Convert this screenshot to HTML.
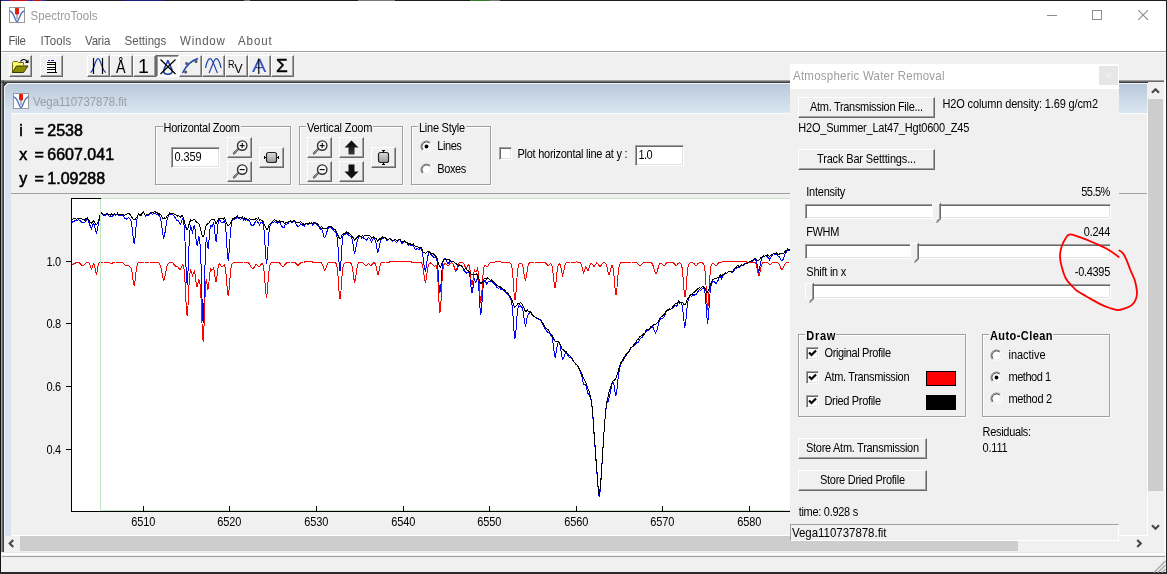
<!DOCTYPE html>
<html><head><meta charset="utf-8"><title>SpectroTools</title>
<style>
html,body{margin:0;padding:0;}
body{width:1167px;height:574px;overflow:hidden;background:#fff;position:relative;
 font-family:"Liberation Sans",sans-serif;font-size:11px;color:#000;}
div,span.t,svg{position:absolute;box-sizing:border-box;}
span.t{white-space:nowrap;}
.btn{background:#f0f0f0;border:1px solid;border-color:#fff #696969 #696969 #fff;box-shadow:inset -1px -1px 0 #a0a0a0;}
.btnp{border:1px solid;border-color:#696969 #fff #fff #696969;box-shadow:inset 1px 1px 0 #a0a0a0;
 background-color:#fff;background-image:linear-gradient(45deg,#f0f0f0 25%,transparent 25%,transparent 75%,#f0f0f0 75%),linear-gradient(45deg,#f0f0f0 25%,transparent 25%,transparent 75%,#f0f0f0 75%);background-size:2px 2px;background-position:0 0,1px 1px;}
.grp{border:1px solid #a0a0a0;box-shadow:1px 1px 0 #fff, inset 1px 1px 0 #fff;}
.sunk{background:#fff;border:1px solid;border-color:#a0a0a0 #fff #fff #a0a0a0;box-shadow:inset 1px 1px 0 #696969, inset -1px -1px 0 #e3e3e3;}
.chk{background:#fff;border:1px solid;border-color:#a0a0a0 #fff #fff #a0a0a0;box-shadow:inset 1px 1px 0 #696969, inset -1px -1px 0 #e3e3e3;}
.lbl{background:#f0f0f0;}
.trk{background:#fff;border:1px solid;border-color:#a0a0a0 #fff #fff #a0a0a0;box-shadow:inset 1px 1px 0 #696969, inset -1px -1px 0 #e3e3e3;}
</style></head><body>
<div id="root" style="left:0;top:0;width:1167px;height:574px;will-change:transform;">

<div style="left:0px;top:0px;width:1167px;height:1px;background:linear-gradient(90deg,#222 0px,#222 2px,#2a2ab0 2px,#2a2ab0 10px,#c01818 10px,#c01818 28px,#2a2ab0 28px,#2a2ab0 33px,#c01818 33px,#c01818 42px,#2a2ab0 42px,#2a2ab0 46px,#1c1c1c 46px,#1c1c1c 122px,#1c1c78 122px,#1c1c78 165px,#1c1c1c 165px,#1c1c1c 244px,#777 244px,#777 250px,#1c1c1c 250px,#1c1c1c 358px,#7a7a7a 358px,#7a7a7a 395px,#1c1c1c 395px,#1c1c1c 470px,#2f7a2f 470px,#2f7a2f 490px,#777 490px,#777 500px,#1c1c1c 500px,#1c1c1c 1167px);"></div>
<div style="left:0px;top:0px;width:1px;height:574px;background:#111;"></div>
<div style="left:1166px;top:0px;width:1px;height:574px;background:#222;"></div>
<div style="left:0px;top:572px;width:1167px;height:2px;background:#2a2a2a;"></div>
<svg style="left:9px;top:7px" width="16" height="16" viewBox="0 0 16 16"><rect x="0.5" y="0.5" width="15" height="15" fill="#fff" stroke="#9a9a9a"/><path d="M0.5 4 C3.5 4 5 9 6.2 12 C7 14 7.6 14.6 8 14.6 C8.4 14.6 9 14 9.8 12 C11 9 12.5 4 15.5 4" fill="none" stroke="#4a6fc0" stroke-width="1.3"/><rect x="7.3" y="6" width="1.4" height="6.5" fill="#9a9a9a"/><rect x="6" y="0.7" width="4" height="6.8" rx="1.3" fill="#e81c0c"/></svg>
<span class="t" style="left:30.60px;top:9.32px;font-size:11.5px;line-height:15px;color:#9b9b9b;letter-spacing:0.048px;transform:scaleY(1.03);transform-origin:0 11.48px;">SpectroTools</span>
<svg style="left:1040px;top:5px" width="120" height="22" viewBox="0 0 120 22"><path d="M7 10.5H17" stroke="#8c8c8c" stroke-width="1" fill="none"/><rect x="52.5" y="5.5" width="9" height="9" stroke="#8c8c8c" fill="none"/><path d="M98.3 5.2L108 14.9M108 5.2L98.3 14.9" stroke="#8c8c8c" stroke-width="1.1" fill="none"/></svg>
<span class="t" style="left:8.50px;top:33.52px;font-size:11.5px;line-height:15px;color:#585858;letter-spacing:-0.410px;transform:scaleY(1.03);transform-origin:0 11.48px;">File</span>
<span class="t" style="left:40.50px;top:33.52px;font-size:11.5px;line-height:15px;color:#585858;letter-spacing:0.152px;transform:scaleY(1.03);transform-origin:0 11.48px;">ITools</span>
<span class="t" style="left:85.00px;top:33.52px;font-size:11.5px;line-height:15px;color:#585858;letter-spacing:-0.173px;transform:scaleY(1.03);transform-origin:0 11.48px;">Varia</span>
<span class="t" style="left:124.50px;top:33.52px;font-size:11.5px;line-height:15px;color:#585858;letter-spacing:0.036px;transform:scaleY(1.03);transform-origin:0 11.48px;">Settings</span>
<span class="t" style="left:180.00px;top:33.52px;font-size:11.5px;line-height:15px;color:#585858;letter-spacing:0.780px;transform:scaleY(1.03);transform-origin:0 11.48px;">Window</span>
<span class="t" style="left:238.00px;top:33.52px;font-size:11.5px;line-height:15px;color:#585858;letter-spacing:0.937px;transform:scaleY(1.03);transform-origin:0 11.48px;">About</span>
<div style="left:1px;top:51px;width:1165px;height:29px;background:#f0f0f0;border-top:1px solid #a0a0a0;box-shadow:inset 0 1px 0 #fff;"></div>
<div class="btn" style="left:9px;top:55px;width:23px;height:22px;"></div>
<svg style="left:9px;top:55px" width="23" height="22" viewBox="0 0 23 22" ><path d="M3.5 17.5V7.5l1-1h4l1 1h5v3" fill="#f4f07a" stroke="#6b6b10" stroke-width="1"/><path d="M3.5 8.5h5.5l1 1h4.5v2H7z" fill="#ffff66" stroke="none"/><path d="M3.5 17.5l4-6.5h11.5l-4.5 6.5z" fill="#8b8b00" stroke="#3a3a00" stroke-width="1"/><path d="M11.5 6.5c2-3 5.5-2.5 6.5 0.5" fill="none" stroke="#000" stroke-width="1.2"/><path d="M19.5 4.5v3.5h-3.5z" fill="#000"/></svg>
<div class="btn" style="left:40px;top:55px;width:23px;height:22px;"></div>
<svg style="left:40px;top:55px" width="23" height="22" viewBox="0 0 23 22" shape-rendering="crispEdges"><rect x="6" y="6" width="10" height="11.5" fill="#fff"/><path d="M8 5.5h2M11 5.5h2.5" stroke="#2222dd" stroke-width="1"/><path d="M7 7.5h7.5M7 9.5h7.5M7 12.5h7.5M7 14.5h7.5M6.5 17.5h10M15.5 6.5v11" stroke="#000" stroke-width="1" fill="none"/></svg>
<div class="btn" style="left:87px;top:55px;width:23px;height:22px;"></div>
<div class="btn" style="left:110px;top:55px;width:23px;height:22px;"></div>
<div class="btn" style="left:133px;top:55px;width:23px;height:22px;"></div>
<div class="btnp" style="left:156px;top:55px;width:23px;height:22px;"></div>
<div class="btn" style="left:179px;top:55px;width:23px;height:22px;"></div>
<div class="btn" style="left:202px;top:55px;width:23px;height:22px;"></div>
<div class="btn" style="left:225px;top:55px;width:23px;height:22px;"></div>
<div class="btn" style="left:248px;top:55px;width:23px;height:22px;"></div>
<div class="btn" style="left:271px;top:55px;width:23px;height:22px;"></div>
<svg style="left:87px;top:55px" width="23" height="22" viewBox="0 0 23 22" ><path d="M3.5 17.5C7 16.5 8 3.6 11 3.6S15 16.5 19 17.5" fill="none" stroke="#1c3fa8" stroke-width="1.2"/><path d="M6.5 3v16M15.5 3v16" stroke="#000" stroke-width="1.2"/></svg>
<span class="t" style="left:116.00px;top:56.04px;font-size:17.5px;line-height:22px;color:#000;transform-origin:0 17.06px;transform:scaleX(0.82);">Å</span>
<span class="t" style="left:137.90px;top:53.74px;font-size:19.5px;line-height:25px;color:#000;transform-origin:0 19.26px;">1</span>
<svg style="left:156px;top:55px" width="23" height="22" viewBox="0 0 23 22" ><path d="M11.9 5.2C11 9 7.6 13.3 7.6 16C7.6 18.1 9.6 19.2 11.9 19.2S16.2 18.1 16.2 16C16.2 13.3 12.8 9 11.9 5.2z" fill="none" stroke="#1c3fa8" stroke-width="1.5"/><path d="M4.5 4.5L19.5 19M19.5 4.5L4.5 19" stroke="#000" stroke-width="1.2"/></svg>
<svg style="left:179px;top:55px" width="23" height="22" viewBox="0 0 23 22" ><path d="M3.5 18C7 11 12 5.5 19 3.5" fill="none" stroke="#1c3fa8" stroke-width="1.5"/><circle cx="7.6" cy="8.6" r="1.5" fill="#555"/><circle cx="17" cy="6.6" r="1.5" fill="#555"/><circle cx="6.6" cy="17" r="1.5" fill="#555"/></svg>
<svg style="left:202px;top:55px" width="23" height="22" viewBox="0 0 23 22" ><path d="M3.5 13C4.5 8 6 3.6 8.3 3.6S12.5 12 15.5 18" fill="none" stroke="#1c3fa8" stroke-width="1.2"/><path d="M19 13C18 8 16.5 3.6 14.2 3.6S10 12 7 18" fill="none" stroke="#1c3fa8" stroke-width="1.2"/></svg>
<span class="t" style="left:227.9px;top:57.9px;font-size:11px;line-height:12px;transform:scaleX(0.82);transform-origin:0 0;">R</span>
<span class="t" style="left:234.3px;top:61.5px;font-size:12.5px;line-height:14px;">V</span>
<span class="t" style="left:251.60px;top:54.02px;font-size:18.7px;line-height:24px;color:#3557c0;transform-origin:0 18.48px;transform:scaleX(1.15);">A</span>
<svg style="left:248px;top:55px" width="23" height="22" viewBox="0 0 23 22" ><path d="M10.8 3.5v15.5" stroke="#000" stroke-width="1.2"/></svg>
<span class="t" style="left:276.00px;top:54.32px;font-size:19px;line-height:24px;color:#000;transform-origin:0 18.58px;-webkit-text-stroke:0.5px #000;">Σ</span>
<div style="left:1px;top:80px;width:1164px;height:473px;background:#f0f0f0;"></div>
<div style="left:1px;top:80px;width:1164px;height:3px;background:linear-gradient(#a0a0a0 0,#a0a0a0 33.3%,#696969 33.3%,#696969 66.6%,#404040 66.6%);"></div>
<div style="left:1px;top:80px;width:3px;height:473px;background:linear-gradient(90deg,#a0a0a0 0,#a0a0a0 33.3%,#696969 33.3%,#696969 66.6%,#404040 66.6%);"></div>
<div style="left:1px;top:80px;width:3px;height:3px;background:linear-gradient(135deg,#a0a0a0 0,#a0a0a0 33.3%,#696969 33.3%,#696969 66.6%,#404040 66.6%);"></div>
<div style="left:4px;top:83px;width:1143px;height:453px;background:#d7e4f2;border-top-left-radius:6px;border:1px solid #eef3fb;border-right:none;border-bottom:none;"></div>
<div style="left:5px;top:84px;width:1142px;height:29px;background:linear-gradient(#b9c9db,#dae6f2);border-top-left-radius:5px;"></div>
<div style="left:4px;top:83px;width:6px;height:6px;background:radial-gradient(circle at 6px 6px, transparent 0, transparent 5px, #eef3fb 5.2px, #eef3fb 6px, #404040 6.4px);"></div>
<svg style="left:13px;top:93px" width="16" height="16" viewBox="0 0 16 16"><rect x="0.5" y="0.5" width="15" height="15" fill="#fff" stroke="#9a9a9a"/><path d="M0.5 4 C3.5 4 5 9 6.2 12 C7 14 7.6 14.6 8 14.6 C8.4 14.6 9 14 9.8 12 C11 9 12.5 4 15.5 4" fill="none" stroke="#4a6fc0" stroke-width="1.3"/><rect x="7.3" y="6" width="1.4" height="6.5" fill="#9a9a9a"/><rect x="6" y="0.7" width="4" height="6.8" rx="1.3" fill="#e81c0c"/></svg>
<span class="t" style="left:33.00px;top:94.52px;font-size:11.5px;line-height:15px;color:#9a9da2;letter-spacing:-0.066px;transform:scaleY(1.03);transform-origin:0 11.48px;">Vega110737878.fit</span>
<div style="left:11px;top:113px;width:1137px;height:423px;background:#f0f0f0;border-right:1px solid #fff;border-bottom:1px solid #fff;border-top:1px solid #fbfbfb;"></div>
<div style="left:4px;top:536px;width:1144px;height:16px;background:#f0f0f0;"></div>
<div style="left:20px;top:536px;width:998px;height:15px;background:#cdcdcd;"></div>
<div style="left:1148px;top:82px;width:17px;height:471px;background:#f0f0f0;"></div>
<div style="left:1148px;top:99px;width:15px;height:392px;background:#cdcdcd;"></div>
<div style="left:1164px;top:80px;width:1px;height:473px;background:#fbfbfb;"></div>
<svg style="left:0;top:0" width="1167" height="574" viewBox="0 0 1167 574"><path d="M13.25 540L9.75 543.5L13.25 547" fill="none" stroke="#4a4a4a" stroke-width="2.2"/></svg>
<svg style="left:0;top:0" width="1167" height="574" viewBox="0 0 1167 574"><path d="M1137.25 540L1140.75 543.5L1137.25 547" fill="none" stroke="#4a4a4a" stroke-width="2.2"/></svg>
<svg style="left:0;top:0" width="1167" height="574" viewBox="0 0 1167 574"><path d="M1152 92.75L1155.5 89.25L1159 92.75" fill="none" stroke="#4a4a4a" stroke-width="2.2"/></svg>
<svg style="left:0;top:0" width="1167" height="574" viewBox="0 0 1167 574"><path d="M1152 525.25L1155.5 528.75L1159 525.25" fill="none" stroke="#4a4a4a" stroke-width="2.2"/></svg>
<div style="left:1px;top:553px;width:1165px;height:19px;background:#f0f0f0;"></div>
<div style="left:1px;top:552px;width:1164px;height:1px;background:#e8e8e8;"></div>
<div style="left:1px;top:553px;width:1164px;height:2px;background:#fdfdfd;"></div>
<div style="left:2px;top:556px;width:1163px;height:1px;background:#a0a0a0;"></div>
<svg style="left:1153px;top:560px" width="13" height="13" viewBox="0 0 13 13" ><path d="M1 12.5L12.5 1M5 12.5L12.5 5M9 12.5L12.5 9" stroke="#a5a5a5" stroke-width="1.2" fill="none"/></svg>
<span class="t" style="left:19.30px;top:120.76px;font-size:16px;line-height:20px;color:#000;-webkit-text-stroke:0.55px #000;">i</span>
<span class="t" style="left:34.50px;top:120.76px;font-size:16px;line-height:20px;color:#000;-webkit-text-stroke:0.55px #000;">=</span>
<span class="t" style="left:47.30px;top:120.76px;font-size:16px;line-height:20px;color:#000;-webkit-text-stroke:0.55px #000;">2538</span>
<span class="t" style="left:19.30px;top:144.76px;font-size:16px;line-height:20px;color:#000;-webkit-text-stroke:0.55px #000;">x</span>
<span class="t" style="left:34.50px;top:144.76px;font-size:16px;line-height:20px;color:#000;-webkit-text-stroke:0.55px #000;">=</span>
<span class="t" style="left:47.30px;top:144.76px;font-size:16px;line-height:20px;color:#000;-webkit-text-stroke:0.55px #000;">6607.041</span>
<span class="t" style="left:19.30px;top:168.66px;font-size:16px;line-height:20px;color:#000;-webkit-text-stroke:0.55px #000;">y</span>
<span class="t" style="left:34.50px;top:168.66px;font-size:16px;line-height:20px;color:#000;-webkit-text-stroke:0.55px #000;">=</span>
<span class="t" style="left:47.30px;top:168.66px;font-size:16px;line-height:20px;color:#000;-webkit-text-stroke:0.55px #000;">1.09288</span>
<div style="left:11px;top:193px;width:1136px;height:1px;background:#a0a0a0;"></div>
<div class="grp" style="left:155px;top:126px;width:136px;height:59px;"></div>
<div class="lbl" style="left:162.5px;top:120px;width:78px;height:12px;"></div>
<span class="t" style="left:163.50px;top:121.39px;font-size:11px;line-height:14px;color:#000;letter-spacing:-0.299px;transform:scaleY(1.13);transform-origin:0 10.81px;">Horizontal Zoom</span>
<div class="sunk" style="left:171px;top:147px;width:49px;height:21px;"></div>
<span class="t" style="left:174.50px;top:150.19px;font-size:11px;line-height:14px;color:#000;letter-spacing:-0.131px;transform:scaleY(1.13);transform-origin:0 10.81px;">0.359</span>
<div class="btn" style="left:227px;top:137px;width:25px;height:21px;"></div>
<svg style="left:227px;top:137px" width="25" height="21" viewBox="0 0 25 21" ><path d="M6.9 16.4L11.3 12" stroke="#5a5a5a" stroke-width="2.3" stroke-linecap="round"/><path d="M7 16.1L10.8 12.3" stroke="#c8c8c8" stroke-width="0.7" stroke-linecap="round"/><circle cx="15.2" cy="8.6" r="4.7" fill="#f8f8f8" stroke="#303030" stroke-width="1.4"/><path d="M12.7 8.6h5" stroke="#000" stroke-width="1.1"/><path d="M15.2 6.1v5" stroke="#000" stroke-width="1.1"/></svg>
<div class="btn" style="left:227px;top:161px;width:25px;height:21px;"></div>
<svg style="left:227px;top:161px" width="25" height="21" viewBox="0 0 25 21" ><path d="M6.9 16.4L11.3 12" stroke="#5a5a5a" stroke-width="2.3" stroke-linecap="round"/><path d="M7 16.1L10.8 12.3" stroke="#c8c8c8" stroke-width="0.7" stroke-linecap="round"/><circle cx="15.2" cy="8.6" r="4.7" fill="#f8f8f8" stroke="#303030" stroke-width="1.4"/><path d="M12.7 8.6h5" stroke="#000" stroke-width="1.1"/></svg>
<div class="btn" style="left:259px;top:147px;width:25px;height:21px;"></div>
<svg style="left:259px;top:147px" width="25" height="21" viewBox="0 0 25 21" ><defs><linearGradient id="g1" x1="0" y1="0" x2="0" y2="1"><stop offset="0" stop-color="#dcdcdc"/><stop offset="1" stop-color="#9a9a9a"/></linearGradient></defs><rect x="7.5" y="5.5" width="10" height="10" rx="2" fill="url(#g1)" stroke="#222" stroke-width="1.2"/><path d="M5 10.5h2.5M17.5 10.5h2.5" stroke="#000" stroke-width="1.2"/><path d="M5.5 9v3M19.5 9v3" stroke="#000" stroke-width="1"/></svg>
<div class="grp" style="left:299px;top:126px;width:104px;height:59px;"></div>
<div class="lbl" style="left:306px;top:120px;width:67px;height:12px;"></div>
<span class="t" style="left:307.00px;top:121.39px;font-size:11px;line-height:14px;color:#000;letter-spacing:-0.145px;transform:scaleY(1.13);transform-origin:0 10.81px;">Vertical Zoom</span>
<div class="btn" style="left:307px;top:137px;width:25px;height:21px;"></div>
<svg style="left:307px;top:137px" width="25" height="21" viewBox="0 0 25 21" ><path d="M6.9 16.4L11.3 12" stroke="#5a5a5a" stroke-width="2.3" stroke-linecap="round"/><path d="M7 16.1L10.8 12.3" stroke="#c8c8c8" stroke-width="0.7" stroke-linecap="round"/><circle cx="15.2" cy="8.6" r="4.7" fill="#f8f8f8" stroke="#303030" stroke-width="1.4"/><path d="M12.7 8.6h5" stroke="#000" stroke-width="1.1"/><path d="M15.2 6.1v5" stroke="#000" stroke-width="1.1"/></svg>
<div class="btn" style="left:307px;top:161px;width:25px;height:21px;"></div>
<svg style="left:307px;top:161px" width="25" height="21" viewBox="0 0 25 21" ><path d="M6.9 16.4L11.3 12" stroke="#5a5a5a" stroke-width="2.3" stroke-linecap="round"/><path d="M7 16.1L10.8 12.3" stroke="#c8c8c8" stroke-width="0.7" stroke-linecap="round"/><circle cx="15.2" cy="8.6" r="4.7" fill="#f8f8f8" stroke="#303030" stroke-width="1.4"/><path d="M12.7 8.6h5" stroke="#000" stroke-width="1.1"/></svg>
<div class="btn" style="left:339px;top:137px;width:25px;height:21px;"></div>
<svg style="left:339px;top:137px" width="25" height="21" viewBox="0 0 25 21" ><defs><linearGradient id="g2" x1="0" y1="0" x2="0" y2="1"><stop offset="0" stop-color="#000"/><stop offset="1" stop-color="#3a3a3a"/></linearGradient></defs><path d="M12.5 3.5L19.5 10.5H15.5V17.5H9.5V10.5H5.5z" fill="url(#g2)"/></svg>
<div class="btn" style="left:339px;top:161px;width:25px;height:21px;"></div>
<svg style="left:339px;top:161px" width="25" height="21" viewBox="0 0 25 21" ><path d="M12.5 17.5L19.5 10.5H15.5V3.5H9.5V10.5H5.5z" fill="#111"/></svg>
<div class="btn" style="left:371px;top:147px;width:25px;height:21px;"></div>
<svg style="left:371px;top:147px" width="25" height="21" viewBox="0 0 25 21" ><rect x="7.5" y="5.5" width="10" height="10" rx="2" fill="url(#g1)" stroke="#222" stroke-width="1.2"/><path d="M12.5 3v2.5M12.5 15.5v2.5" stroke="#000" stroke-width="1.2"/><path d="M11 3.5h3M11 17.5h3" stroke="#000" stroke-width="1"/></svg>
<div class="grp" style="left:411px;top:126px;width:80px;height:59px;"></div>
<div class="lbl" style="left:418px;top:120px;width:47.5px;height:12px;"></div>
<span class="t" style="left:419.00px;top:121.39px;font-size:11px;line-height:14px;color:#000;letter-spacing:-0.256px;transform:scaleY(1.13);transform-origin:0 10.81px;">Line Style</span>
<svg style="left:419.7px;top:139.5px" width="13" height="13" viewBox="0 0 13 13" ><circle cx="6.5" cy="6.5" r="5.2" fill="#fff"/><path d="M2.61 10.39A5.5 5.5 0 0 1 10.39 2.61" fill="none" stroke="#8a8a8a" stroke-width="1.1"/><path d="M3.32 9.68A4.5 4.5 0 0 1 9.68 3.32" fill="none" stroke="#4a4a4a" stroke-width="1"/><path d="M2.61 10.39A5.5 5.5 0 0 0 10.39 2.61" fill="none" stroke="#fff" stroke-width="1.1"/><path d="M3.32 9.68A4.5 4.5 0 0 0 9.68 3.32" fill="none" stroke="#e3e3e3" stroke-width="1"/><circle cx="6.5" cy="6.5" r="1.9" fill="#000"/></svg>
<span class="t" style="left:437.30px;top:139.19px;font-size:11px;line-height:14px;color:#000;letter-spacing:-0.449px;transform:scaleY(1.13);transform-origin:0 10.81px;">Lines</span>
<svg style="left:419.7px;top:162.8px" width="13" height="13" viewBox="0 0 13 13" ><circle cx="6.5" cy="6.5" r="5.2" fill="#fff"/><path d="M2.61 10.39A5.5 5.5 0 0 1 10.39 2.61" fill="none" stroke="#8a8a8a" stroke-width="1.1"/><path d="M3.32 9.68A4.5 4.5 0 0 1 9.68 3.32" fill="none" stroke="#4a4a4a" stroke-width="1"/><path d="M2.61 10.39A5.5 5.5 0 0 0 10.39 2.61" fill="none" stroke="#fff" stroke-width="1.1"/><path d="M3.32 9.68A4.5 4.5 0 0 0 9.68 3.32" fill="none" stroke="#e3e3e3" stroke-width="1"/></svg>
<span class="t" style="left:437.30px;top:162.19px;font-size:11px;line-height:14px;color:#000;letter-spacing:-0.393px;transform:scaleY(1.13);transform-origin:0 10.81px;">Boxes</span>
<div class="chk" style="left:499px;top:147px;width:13px;height:13px;"></div>
<span class="t" style="left:517.50px;top:146.69px;font-size:11px;line-height:14px;color:#000;letter-spacing:-0.261px;transform:scaleY(1.13);transform-origin:0 10.81px;">Plot horizontal line at y :</span>
<div class="sunk" style="left:635px;top:145px;width:49px;height:21px;"></div>
<span class="t" style="left:638.50px;top:148.19px;font-size:11px;line-height:14px;color:#000;letter-spacing:-0.645px;transform:scaleY(1.13);transform-origin:0 10.81px;">1.0</span>
<div style="left:72px;top:199px;width:718px;height:312px;background:#fff;"></div>
<svg style="left:0;top:0" width="790" height="536" viewBox="0 0 790 536"><g shape-rendering="crispEdges"><path d="M71.5,222.1L72.5,222.1L73.5,221.2L74.5,221.0L75.5,220.7L76.5,220.9L77.5,220.6L78.5,219.7L79.5,220.2L80.5,220.7L81.5,222.0L82.5,222.8L83.5,222.6L84.5,222.9L85.5,220.9L86.5,219.8L87.5,219.3L88.5,221.2L89.5,223.8L90.5,227.0L91.5,228.6L92.5,225.7L93.5,223.5L94.5,224.6L95.5,230.8L96.5,233.9L97.5,228.6L98.5,223.2L99.5,219.2L100.5,214.1L101.5,213.4L102.5,214.6L103.5,215.0L104.5,215.3L105.5,215.8L106.5,214.4L107.5,214.4L108.5,215.8L109.5,216.4L110.5,216.9L111.5,216.6L112.5,215.9L113.5,214.9L114.5,214.0L115.5,215.1L116.5,214.9L117.5,214.6L118.5,215.6L119.5,215.5L120.5,215.4L121.5,215.7L122.5,215.3L123.5,215.7L124.5,218.2L125.5,218.5L126.5,219.2L127.5,218.2L128.5,217.4L129.5,218.3L130.5,219.6L131.5,223.0L132.5,229.9L133.5,241.9L134.5,243.2L135.5,232.3L136.5,221.9L137.5,216.4L138.5,214.3L139.5,215.5L140.5,215.9L141.5,215.0L142.5,213.1L143.5,211.9L144.5,214.2L145.5,216.0L146.5,214.8L147.5,215.5L148.5,215.5L149.5,213.9L150.5,213.4L151.5,213.3L152.5,214.2L153.5,213.7L154.5,213.6L155.5,213.9L156.5,214.2L157.5,214.4L158.5,215.7L159.5,215.6L160.5,218.3L161.5,223.7L162.5,232.3L163.5,237.9L164.5,235.6L165.5,229.6L166.5,222.4L167.5,217.8L168.5,215.6L169.5,212.9L170.5,214.1L171.5,214.7L172.5,214.8L173.5,215.3L174.5,217.0L175.5,218.3L176.5,220.2L177.5,220.4L178.5,220.4L179.5,223.6L180.5,224.6L181.5,221.0L182.5,219.0L183.5,220.6L184.5,229.9L185.5,252.1L186.5,281.0L187.5,285.1L188.5,258.0L189.5,234.2L190.5,225.4L191.5,229.3L192.5,232.4L193.5,228.1L194.5,224.8L195.5,232.6L196.5,244.3L197.5,245.3L198.5,236.8L199.5,238.3L200.5,249.6L201.5,278.4L202.5,318.6L203.5,323.2L204.5,284.1L205.5,246.6L206.5,236.9L207.5,247.5L208.5,248.2L209.5,232.8L210.5,225.4L211.5,226.0L212.5,226.0L213.5,223.1L214.5,227.1L215.5,240.2L216.5,240.9L217.5,228.0L218.5,221.1L219.5,220.0L220.5,221.0L221.5,222.4L222.5,222.8L223.5,222.4L224.5,220.6L225.5,225.2L226.5,238.8L227.5,256.3L228.5,260.7L229.5,246.3L230.5,231.1L231.5,223.0L232.5,219.8L233.5,219.5L234.5,219.1L235.5,218.3L236.5,218.0L237.5,217.3L238.5,218.7L239.5,218.7L240.5,219.5L241.5,218.6L242.5,217.8L243.5,220.4L244.5,218.7L245.5,220.0L246.5,219.4L247.5,220.3L248.5,219.9L249.5,220.9L250.5,223.1L251.5,225.7L252.5,225.5L253.5,225.6L254.5,223.6L255.5,221.5L256.5,220.4L257.5,221.5L258.5,223.3L259.5,225.2L260.5,222.8L261.5,222.1L262.5,222.7L263.5,224.6L264.5,235.5L265.5,253.7L266.5,264.3L267.5,256.1L268.5,237.3L269.5,227.7L270.5,224.5L271.5,223.7L272.5,222.0L273.5,222.1L274.5,221.9L275.5,222.2L276.5,221.9L277.5,223.3L278.5,222.3L279.5,221.7L280.5,223.8L281.5,225.8L282.5,227.1L283.5,227.2L284.5,227.1L285.5,223.7L286.5,224.1L287.5,223.8L288.5,222.9L289.5,221.5L290.5,221.4L291.5,222.9L292.5,222.3L293.5,221.3L294.5,221.6L295.5,222.8L296.5,225.6L297.5,226.0L298.5,226.6L299.5,225.6L300.5,223.9L301.5,224.5L302.5,225.3L303.5,224.8L304.5,226.0L305.5,224.6L306.5,223.8L307.5,224.8L308.5,224.7L309.5,223.8L310.5,223.9L311.5,223.5L312.5,225.1L313.5,223.9L314.5,223.3L315.5,223.1L316.5,224.7L317.5,224.5L318.5,226.6L319.5,227.8L320.5,229.2L321.5,228.6L322.5,231.4L323.5,235.3L324.5,237.8L325.5,236.8L326.5,232.8L327.5,230.3L328.5,227.8L329.5,227.5L330.5,227.7L331.5,228.0L332.5,228.9L333.5,230.2L334.5,231.7L335.5,231.4L336.5,233.9L337.5,240.0L338.5,253.7L339.5,270.2L340.5,270.4L341.5,252.7L342.5,238.3L343.5,234.3L344.5,234.1L345.5,234.1L346.5,233.2L347.5,233.7L348.5,235.1L349.5,235.4L350.5,236.2L351.5,237.2L352.5,241.1L353.5,247.1L354.5,254.1L355.5,249.6L356.5,243.9L357.5,239.8L358.5,237.6L359.5,236.5L360.5,236.5L361.5,238.0L362.5,237.3L363.5,237.9L364.5,238.6L365.5,239.1L366.5,240.2L367.5,238.9L368.5,237.5L369.5,238.2L370.5,240.0L371.5,241.6L372.5,239.8L373.5,237.9L374.5,238.7L375.5,241.7L376.5,244.9L377.5,252.6L378.5,251.8L379.5,244.5L380.5,241.2L381.5,239.1L382.5,237.9L383.5,238.1L384.5,237.5L385.5,238.2L386.5,240.5L387.5,240.1L388.5,239.3L389.5,238.7L390.5,239.0L391.5,240.0L392.5,241.2L393.5,240.9L394.5,240.7L395.5,241.7L396.5,242.7L397.5,241.8L398.5,239.1L399.5,239.7L400.5,240.7L401.5,243.2L402.5,243.1L403.5,242.3L404.5,241.7L405.5,242.8L406.5,242.9L407.5,243.5L408.5,245.3L409.5,244.6L410.5,244.9L411.5,245.8L412.5,245.4L413.5,245.6L414.5,248.3L415.5,249.2L416.5,249.0L417.5,248.8L418.5,249.2L419.5,249.7L420.5,248.3L421.5,249.2L422.5,253.0L423.5,260.7L424.5,268.1L425.5,271.6L426.5,265.0L427.5,257.0L428.5,254.0L429.5,252.4L430.5,254.3L431.5,254.9L432.5,255.9L433.5,257.1L434.5,257.6L435.5,257.5L436.5,257.8L437.5,263.1L438.5,276.8L439.5,292.1L440.5,292.0L441.5,276.5L442.5,263.7L443.5,259.4L444.5,258.9L445.5,259.0L446.5,261.3L447.5,263.2L448.5,263.3L449.5,261.6L450.5,261.2L451.5,262.8L452.5,263.1L453.5,264.7L454.5,268.7L455.5,271.4L456.5,270.7L457.5,268.3L458.5,266.4L459.5,265.1L460.5,265.9L461.5,266.0L462.5,267.2L463.5,269.4L464.5,271.5L465.5,272.0L466.5,273.1L467.5,272.6L468.5,272.3L469.5,273.8L470.5,280.9L471.5,292.4L472.5,292.2L473.5,283.1L474.5,279.4L475.5,281.9L476.5,281.1L477.5,278.0L478.5,282.7L479.5,299.5L480.5,315.4L481.5,310.2L482.5,294.4L483.5,282.7L484.5,280.3L485.5,281.1L486.5,284.0L487.5,282.7L488.5,281.2L489.5,281.3L490.5,281.5L491.5,280.9L492.5,281.9L493.5,282.8L494.5,284.2L495.5,285.1L496.5,287.1L497.5,287.8L498.5,288.1L499.5,287.7L500.5,288.8L501.5,289.8L502.5,289.3L503.5,289.8L504.5,291.0L505.5,292.0L506.5,293.3L507.5,293.7L508.5,295.2L509.5,296.5L510.5,298.6L511.5,301.6L512.5,308.3L513.5,323.0L514.5,338.3L515.5,337.8L516.5,322.1L517.5,310.0L518.5,305.6L519.5,306.2L520.5,305.8L521.5,307.0L522.5,307.9L523.5,313.8L524.5,321.7L525.5,326.9L526.5,321.5L527.5,315.4L528.5,314.1L529.5,313.1L530.5,312.2L531.5,313.4L532.5,314.9L533.5,316.1L534.5,316.9L535.5,317.5L536.5,317.5L537.5,318.4L538.5,318.9L539.5,319.6L540.5,320.0L541.5,321.2L542.5,324.4L543.5,325.9L544.5,328.2L545.5,329.1L546.5,330.3L547.5,332.6L548.5,332.4L549.5,333.3L550.5,335.3L551.5,335.2L552.5,338.9L553.5,346.2L554.5,355.9L555.5,357.2L556.5,349.8L557.5,343.9L558.5,342.5L559.5,343.4L560.5,346.9L561.5,354.2L562.5,359.2L563.5,357.9L564.5,355.4L565.5,353.0L566.5,352.9L567.5,354.8L568.5,356.1L569.5,357.3L570.5,357.5L571.5,358.0L572.5,359.6L573.5,361.9L574.5,362.5L575.5,364.2L576.5,364.6L577.5,365.5L578.5,367.8L579.5,369.9L580.5,372.2L581.5,374.8L582.5,379.9L583.5,384.5L584.5,384.8L585.5,384.9L586.5,386.8L587.5,392.7L588.5,394.4L589.5,395.8L590.5,397.6L591.5,402.9L592.5,411.5L593.5,426.5L594.5,440.7L595.5,453.1L596.5,468.0L597.5,479.4L598.5,494.1L599.5,497.3L600.5,487.3L601.5,473.0L602.5,455.5L603.5,440.4L604.5,425.1L605.5,413.7L606.5,404.2L607.5,402.3L608.5,400.6L609.5,396.3L610.5,391.8L611.5,386.0L612.5,382.0L613.5,382.4L614.5,388.3L615.5,395.0L616.5,393.9L617.5,383.6L618.5,375.0L619.5,368.6L620.5,364.5L621.5,362.9L622.5,361.3L623.5,359.9L624.5,357.4L625.5,356.6L626.5,354.4L627.5,353.2L628.5,352.8L629.5,351.6L630.5,348.6L631.5,347.8L632.5,346.8L633.5,346.0L634.5,345.2L635.5,343.9L636.5,342.8L637.5,342.0L638.5,342.0L639.5,339.5L640.5,338.5L641.5,337.5L642.5,337.4L643.5,335.4L644.5,334.8L645.5,331.9L646.5,330.8L647.5,330.6L648.5,330.2L649.5,329.8L650.5,327.8L651.5,327.2L652.5,326.7L653.5,328.4L654.5,331.3L655.5,333.1L656.5,331.5L657.5,328.7L658.5,323.8L659.5,320.7L660.5,318.5L661.5,318.2L662.5,318.4L663.5,317.2L664.5,316.9L665.5,313.1L666.5,310.8L667.5,310.0L668.5,309.7L669.5,308.9L670.5,309.2L671.5,308.7L672.5,308.3L673.5,307.2L674.5,306.6L675.5,305.7L676.5,306.3L677.5,305.0L678.5,301.6L679.5,303.5L680.5,302.7L681.5,303.1L682.5,307.0L683.5,316.1L684.5,326.7L685.5,325.2L686.5,313.1L687.5,302.8L688.5,298.8L689.5,296.8L690.5,295.8L691.5,296.1L692.5,295.9L693.5,294.8L694.5,295.0L695.5,294.8L696.5,294.5L697.5,292.2L698.5,290.9L699.5,289.4L700.5,290.2L701.5,289.5L702.5,288.7L703.5,288.9L704.5,289.4L705.5,295.5L706.5,311.8L707.5,324.1L708.5,316.9L709.5,299.7L710.5,287.9L711.5,284.2L712.5,281.3L713.5,281.4L714.5,281.6L715.5,283.4L716.5,283.6L717.5,281.0L718.5,279.7L719.5,277.2L720.5,276.5L721.5,278.6L722.5,276.7L723.5,275.4L724.5,274.4L725.5,273.4L726.5,273.5L727.5,272.6L728.5,271.5L729.5,271.3L730.5,271.5L731.5,272.6L732.5,272.6L733.5,271.8L734.5,269.7L735.5,268.7L736.5,268.7L737.5,267.7L738.5,267.3L739.5,267.3L740.5,265.7L741.5,265.7L742.5,265.6L743.5,264.9L744.5,263.3L745.5,263.1L746.5,263.8L747.5,263.4L748.5,262.8L749.5,261.5L750.5,261.4L751.5,261.8L752.5,261.3L753.5,260.3L754.5,259.0L755.5,260.0L756.5,260.9L757.5,266.3L758.5,271.8L759.5,270.2L760.5,262.6L761.5,259.0L762.5,257.0L763.5,255.7L764.5,256.2L765.5,255.6L766.5,256.6L767.5,256.8L768.5,258.0L769.5,259.6L770.5,257.4L771.5,256.2L772.5,254.8L773.5,253.3L774.5,254.3L775.5,254.9L776.5,254.1L777.5,255.5L778.5,256.1L779.5,256.9L780.5,258.8L781.5,260.5L782.5,260.4L783.5,258.8L784.5,255.3L785.5,252.4L786.5,252.0L787.5,249.1L788.5,250.1L789.5,250.3L790.5,249.9" fill="none" stroke="#0000ff" stroke-width="1"/><path d="M71.5,264.8L72.5,264.6L73.5,264.1L74.5,263.5L75.5,263.0L76.5,262.6L77.5,262.4L78.5,262.5L79.5,262.9L80.5,263.9L81.5,265.1L82.5,265.9L83.5,265.5L84.5,264.4L85.5,263.2L86.5,262.6L87.5,262.4L88.5,262.5L89.5,263.8L90.5,267.0L91.5,269.1L92.5,266.4L93.5,263.8L94.5,264.9L95.5,270.8L96.5,274.7L97.5,269.2L98.5,263.9L99.5,262.5L100.5,262.2L101.5,262.1L102.5,262.1L103.5,262.0L104.5,262.0L105.5,262.0L106.5,262.0L107.5,262.1L108.5,262.4L109.5,262.9L110.5,263.4L111.5,263.4L112.5,263.0L113.5,262.4L114.5,262.1L115.5,262.0L116.5,262.0L117.5,262.0L118.5,262.0L119.5,262.1L120.5,262.1L121.5,262.2L122.5,262.5L123.5,263.2L124.5,264.4L125.5,265.4L126.5,265.6L127.5,265.3L128.5,265.6L129.5,266.7L130.5,267.3L131.5,268.8L132.5,275.1L133.5,284.0L134.5,285.0L135.5,276.4L136.5,267.8L137.5,263.8L138.5,262.7L139.5,262.4L140.5,262.3L141.5,262.2L142.5,262.1L143.5,262.1L144.5,262.0L145.5,262.0L146.5,262.1L147.5,262.1L148.5,262.1L149.5,262.0L150.5,262.0L151.5,262.0L152.5,262.1L153.5,262.1L154.5,262.1L155.5,262.2L156.5,262.2L157.5,262.4L158.5,262.7L159.5,263.5L160.5,265.8L161.5,270.3L162.5,276.2L163.5,280.3L164.5,279.2L165.5,273.8L166.5,268.2L167.5,264.7L168.5,263.1L169.5,262.6L170.5,262.5L171.5,262.5L172.5,262.7L173.5,263.7L174.5,265.0L175.5,266.2L176.5,266.5L177.5,266.4L178.5,267.4L179.5,269.4L180.5,269.2L181.5,266.8L182.5,265.0L183.5,265.7L184.5,272.2L185.5,290.3L186.5,313.3L187.5,316.3L188.5,295.4L189.5,275.8L190.5,269.6L191.5,272.4L192.5,275.2L193.5,272.6L194.5,270.8L195.5,277.1L196.5,286.8L197.5,286.3L198.5,279.6L199.5,280.2L200.5,287.8L201.5,308.4L202.5,338.0L203.5,341.5L204.5,312.0L205.5,283.9L206.5,279.1L207.5,289.1L208.5,288.3L209.5,275.2L210.5,268.8L211.5,270.0L212.5,269.7L213.5,267.7L214.5,271.8L215.5,281.5L216.5,281.4L217.5,270.9L218.5,264.8L219.5,264.0L220.5,265.2L221.5,266.9L222.5,267.0L223.5,265.5L224.5,265.0L225.5,268.5L226.5,279.0L227.5,293.0L228.5,296.4L229.5,284.7L230.5,271.6L231.5,265.1L232.5,263.2L233.5,262.7L234.5,262.5L235.5,262.4L236.5,262.3L237.5,262.2L238.5,262.2L239.5,262.1L240.5,262.1L241.5,262.1L242.5,262.1L243.5,262.0L244.5,262.0L245.5,262.1L246.5,262.2L247.5,262.4L248.5,263.0L249.5,264.2L250.5,265.9L251.5,267.7L252.5,268.8L253.5,268.2L254.5,266.6L255.5,265.0L256.5,264.4L257.5,265.2L258.5,266.7L259.5,266.7L260.5,265.1L261.5,263.8L262.5,263.9L263.5,266.7L264.5,275.4L265.5,290.0L266.5,298.3L267.5,289.9L268.5,275.3L269.5,266.5L270.5,263.6L271.5,262.9L272.5,262.6L273.5,262.4L274.5,262.3L275.5,262.3L276.5,262.2L277.5,262.3L278.5,262.4L279.5,262.9L280.5,264.0L281.5,265.4L282.5,266.8L283.5,266.8L284.5,265.4L285.5,263.9L286.5,262.8L287.5,262.3L288.5,262.1L289.5,262.1L290.5,262.0L291.5,262.0L292.5,262.1L293.5,262.1L294.5,262.4L295.5,263.0L296.5,264.1L297.5,265.1L298.5,265.1L299.5,264.1L300.5,263.0L301.5,262.3L302.5,262.1L303.5,262.0L304.5,262.0L305.5,261.9L306.5,261.9L307.5,261.9L308.5,261.9L309.5,261.9L310.5,261.9L311.5,261.9L312.5,262.0L313.5,262.0L314.5,262.0L315.5,262.0L316.5,262.0L317.5,262.0L318.5,262.0L319.5,262.1L320.5,262.2L321.5,262.8L322.5,264.5L323.5,268.0L324.5,270.7L325.5,269.4L326.5,265.9L327.5,263.4L328.5,262.5L329.5,262.3L330.5,262.3L331.5,262.3L332.5,262.4L333.5,262.5L334.5,262.7L335.5,263.0L336.5,264.3L337.5,269.4L338.5,282.8L339.5,298.4L340.5,298.5L341.5,282.8L342.5,269.5L343.5,264.4L344.5,263.1L345.5,262.8L346.5,262.6L347.5,262.5L348.5,262.5L349.5,262.6L350.5,262.9L351.5,264.1L352.5,268.2L353.5,276.3L354.5,282.5L355.5,279.4L356.5,271.0L357.5,265.2L358.5,263.0L359.5,262.5L360.5,262.4L361.5,262.4L362.5,262.6L363.5,263.2L364.5,264.3L365.5,265.3L366.5,265.4L367.5,264.5L368.5,263.9L369.5,264.3L370.5,265.3L371.5,265.3L372.5,264.0L373.5,263.0L374.5,262.8L375.5,264.1L376.5,268.4L377.5,274.2L378.5,274.2L379.5,268.4L380.5,264.0L381.5,262.6L382.5,262.2L383.5,262.1L384.5,262.1L385.5,262.0L386.5,262.0L387.5,262.0L388.5,262.0L389.5,262.0L390.5,261.9L391.5,261.9L392.5,261.9L393.5,261.9L394.5,261.9L395.5,261.9L396.5,261.9L397.5,261.9L398.5,261.9L399.5,261.9L400.5,261.9L401.5,261.9L402.5,261.9L403.5,261.9L404.5,261.9L405.5,261.9L406.5,261.9L407.5,261.9L408.5,261.9L409.5,261.9L410.5,261.9L411.5,262.0L412.5,262.0L413.5,262.0L414.5,262.0L415.5,262.0L416.5,262.1L417.5,262.1L418.5,262.2L419.5,262.3L420.5,262.4L421.5,262.9L422.5,264.8L423.5,270.2L424.5,278.7L425.5,282.7L426.5,277.2L427.5,269.0L428.5,264.5L429.5,263.1L430.5,263.0L431.5,263.4L432.5,264.6L433.5,266.0L434.5,266.2L435.5,265.4L436.5,266.0L437.5,272.7L438.5,291.0L439.5,312.1L440.5,312.0L441.5,290.9L442.5,272.5L443.5,265.4L444.5,263.7L445.5,263.7L446.5,264.6L447.5,265.7L448.5,265.6L449.5,264.2L450.5,263.1L451.5,262.7L452.5,263.1L453.5,264.8L454.5,268.0L455.5,270.8L456.5,269.5L457.5,265.8L458.5,263.4L459.5,262.5L460.5,262.3L461.5,262.3L462.5,262.5L463.5,263.4L464.5,265.3L465.5,267.5L466.5,267.6L467.5,265.8L468.5,264.5L469.5,266.4L470.5,274.1L471.5,284.5L472.5,284.6L473.5,275.0L474.5,269.9L475.5,271.9L476.5,271.8L477.5,269.0L478.5,273.4L479.5,288.6L480.5,303.4L481.5,298.8L482.5,281.1L483.5,268.7L484.5,265.1L485.5,265.5L486.5,266.8L487.5,266.6L488.5,264.8L489.5,263.2L490.5,262.5L491.5,262.2L492.5,262.2L493.5,262.1L494.5,262.1L495.5,261.9L496.5,261.9L497.5,261.9L498.5,261.9L499.5,261.9L500.5,262.0L501.5,262.1L502.5,262.1L503.5,262.1L504.5,262.1L505.5,262.2L506.5,262.3L507.5,262.3L508.5,262.5L509.5,262.7L510.5,263.2L511.5,264.9L512.5,270.9L513.5,284.7L514.5,299.7L515.5,299.7L516.5,284.7L517.5,271.0L518.5,265.0L519.5,263.5L520.5,263.2L521.5,263.4L522.5,264.9L523.5,269.7L524.5,277.2L525.5,280.8L526.5,275.6L527.5,268.2L528.5,264.1L529.5,262.8L530.5,262.3L531.5,262.2L532.5,262.1L533.5,262.1L534.5,262.0L535.5,262.0L536.5,262.0L537.5,262.0L538.5,262.0L539.5,262.0L540.5,262.0L541.5,262.0L542.5,262.1L543.5,262.1L544.5,262.3L545.5,262.8L546.5,264.0L547.5,265.3L548.5,265.4L549.5,264.3L550.5,263.5L551.5,264.1L552.5,268.0L553.5,277.2L554.5,287.4L555.5,287.4L556.5,277.2L557.5,268.0L558.5,264.2L559.5,263.6L560.5,265.5L561.5,270.6L562.5,275.3L563.5,272.9L564.5,266.9L565.5,263.5L566.5,262.5L567.5,262.3L568.5,262.2L569.5,262.1L570.5,262.0L571.5,262.0L572.5,262.0L573.5,262.0L574.5,262.0L575.5,262.1L576.5,262.0L577.5,262.1L578.5,262.1L579.5,262.3L580.5,262.8L581.5,264.9L582.5,269.5L583.5,273.2L584.5,270.8L585.5,266.9L586.5,267.3L587.5,270.5L588.5,270.4L589.5,266.5L590.5,263.6L591.5,263.1L592.5,264.4L593.5,266.3L594.5,266.3L595.5,264.4L596.5,263.0L597.5,263.2L598.5,264.6L599.5,266.3L600.5,266.3L601.5,264.7L602.5,263.2L603.5,262.6L604.5,262.6L605.5,263.1L606.5,265.1L607.5,269.6L608.5,274.7L609.5,274.8L610.5,269.9L611.5,265.8L612.5,265.3L613.5,269.8L614.5,281.4L615.5,294.1L616.5,294.1L617.5,281.2L618.5,269.5L619.5,264.4L620.5,263.0L621.5,262.6L622.5,262.5L623.5,262.3L624.5,262.2L625.5,262.2L626.5,262.1L627.5,262.1L628.5,262.1L629.5,262.1L630.5,262.1L631.5,262.0L632.5,262.0L633.5,262.0L634.5,262.1L635.5,262.3L636.5,262.8L637.5,263.5L638.5,264.5L639.5,265.2L640.5,265.2L641.5,264.5L642.5,263.6L643.5,262.8L644.5,262.4L645.5,262.2L646.5,262.1L647.5,262.2L648.5,262.2L649.5,262.2L650.5,262.4L651.5,262.8L652.5,264.1L653.5,266.7L654.5,270.5L655.5,273.7L656.5,273.7L657.5,270.5L658.5,266.7L659.5,264.2L660.5,263.2L661.5,263.5L662.5,264.4L663.5,265.3L664.5,265.3L665.5,264.3L666.5,263.1L667.5,262.5L668.5,262.2L669.5,262.1L670.5,262.2L671.5,262.2L672.5,262.4L673.5,262.9L674.5,264.0L675.5,265.3L676.5,265.4L677.5,264.2L678.5,263.2L679.5,262.9L680.5,263.2L681.5,264.7L682.5,270.2L683.5,282.9L684.5,296.8L685.5,296.8L686.5,282.9L687.5,270.2L688.5,264.6L689.5,263.1L690.5,262.7L691.5,262.5L692.5,262.5L693.5,263.1L694.5,264.2L695.5,265.5L696.5,265.5L697.5,264.2L698.5,263.1L699.5,262.7L700.5,262.5L701.5,262.7L702.5,263.0L703.5,263.6L704.5,266.1L705.5,275.3L706.5,294.7L707.5,310.4L708.5,302.8L709.5,282.1L710.5,268.6L711.5,264.2L712.5,263.3L713.5,263.4L714.5,264.4L715.5,265.5L716.5,265.4L717.5,264.1L718.5,262.9L719.5,262.3L720.5,262.2L721.5,262.1L722.5,261.9L723.5,261.9L724.5,261.9L725.5,261.9L726.5,261.9L727.5,261.9L728.5,261.9L729.5,261.9L730.5,261.9L731.5,261.9L732.5,261.9L733.5,261.9L734.5,261.9L735.5,261.9L736.5,261.9L737.5,261.9L738.5,261.9L739.5,261.9L740.5,261.9L741.5,261.9L742.5,261.9L743.5,261.9L744.5,261.9L745.5,261.9L746.5,262.0L747.5,262.0L748.5,262.0L749.5,262.0L750.5,262.0L751.5,262.1L752.5,262.1L753.5,262.2L754.5,262.4L755.5,263.0L756.5,265.3L757.5,270.5L758.5,275.7L759.5,275.0L760.5,269.3L761.5,264.7L762.5,262.8L763.5,262.3L764.5,262.2L765.5,262.2L766.5,262.3L767.5,262.7L768.5,263.6L769.5,264.7L770.5,264.7L771.5,263.6L772.5,262.6L773.5,262.2L774.5,262.1L775.5,262.1L776.5,262.2L777.5,262.5L778.5,263.3L779.5,264.9L780.5,267.4L781.5,269.4L782.5,269.4L783.5,267.4L784.5,264.9L785.5,263.2L786.5,262.5L787.5,262.2L788.5,262.1L789.5,262.0L790.5,262.0" fill="none" stroke="#ff0000" stroke-width="1"/><path d="M71.5,219.1L72.5,219.2L73.5,218.7L74.5,218.8L75.5,218.8L76.5,219.2L77.5,219.0L78.5,218.1L79.5,218.3L80.5,218.2L81.5,218.9L82.5,219.1L83.5,219.2L84.5,220.2L85.5,218.8L86.5,218.1L87.5,217.8L88.5,219.5L89.5,221.4L90.5,222.7L91.5,223.0L92.5,221.7L93.5,221.0L94.5,221.6L95.5,224.3L96.5,224.9L97.5,222.9L98.5,220.7L99.5,217.6L100.5,213.4L101.5,212.9L102.5,213.8L103.5,214.5L104.5,214.6L105.5,214.5L106.5,213.9L107.5,213.9L108.5,214.4L109.5,215.0L110.5,215.1L111.5,213.9L112.5,214.5L113.5,214.1L114.5,213.7L115.5,214.7L116.5,214.3L117.5,213.2L118.5,214.8L119.5,214.6L120.5,214.3L121.5,214.7L122.5,214.1L123.5,214.3L124.5,215.4L125.5,214.6L126.5,214.2L127.5,213.8L128.5,213.4L129.5,214.1L130.5,215.1L131.5,217.3L132.5,218.0L133.5,219.6L134.5,219.7L135.5,219.1L136.5,217.6L137.5,215.9L138.5,213.7L139.5,214.7L140.5,215.0L141.5,214.1L142.5,212.7L143.5,212.4L144.5,214.0L145.5,215.4L146.5,214.2L147.5,214.3L148.5,214.6L149.5,213.3L150.5,212.5L151.5,212.7L152.5,212.7L153.5,212.6L154.5,211.8L155.5,212.0L156.5,212.3L157.5,212.5L158.5,214.4L159.5,214.0L160.5,214.5L161.5,215.6L162.5,218.3L163.5,218.9L164.5,217.9L165.5,218.5L166.5,217.1L167.5,215.2L168.5,215.5L169.5,213.6L170.5,213.4L171.5,213.8L172.5,213.9L173.5,213.9L174.5,214.4L175.5,214.2L176.5,215.3L177.5,216.0L178.5,215.6L179.5,216.1L180.5,216.9L181.5,216.0L182.5,215.5L183.5,217.7L184.5,221.9L185.5,225.8L186.5,229.0L187.5,229.6L188.5,225.9L189.5,223.3L190.5,219.8L191.5,220.1L192.5,220.4L193.5,219.8L194.5,219.6L195.5,220.6L196.5,222.1L197.5,222.9L198.5,223.4L199.5,224.7L200.5,228.4L201.5,232.9L202.5,236.3L203.5,236.8L204.5,232.8L205.5,228.1L206.5,224.3L207.5,224.0L208.5,223.8L209.5,222.3L210.5,220.5L211.5,219.1L212.5,219.5L213.5,219.6L214.5,219.6L215.5,223.1L216.5,223.4L217.5,221.3L218.5,219.2L219.5,218.2L220.5,218.5L221.5,218.2L222.5,218.2L223.5,218.9L224.5,218.0L225.5,220.0L226.5,223.1L227.5,225.3L228.5,225.9L229.5,224.4L230.5,223.8L231.5,221.3L232.5,218.6L233.5,218.7L234.5,218.1L235.5,217.1L236.5,216.6L237.5,215.9L238.5,217.7L239.5,217.9L240.5,218.0L241.5,217.4L242.5,216.8L243.5,219.0L244.5,217.9L245.5,219.0L246.5,218.3L247.5,219.5L248.5,219.3L249.5,218.6L250.5,219.3L251.5,219.6L252.5,219.4L253.5,219.6L254.5,219.9L255.5,218.9L256.5,218.7L257.5,219.7L258.5,218.2L259.5,220.0L260.5,219.5L261.5,220.2L262.5,221.0L263.5,222.3L264.5,224.9L265.5,227.1L266.5,229.5L267.5,229.4L268.5,226.2L269.5,224.4L270.5,223.2L271.5,222.9L272.5,221.1L273.5,220.5L274.5,219.7L275.5,220.9L276.5,221.0L277.5,222.0L278.5,221.4L279.5,220.6L280.5,222.0L281.5,221.3L282.5,221.3L283.5,222.1L284.5,223.6L285.5,222.1L286.5,222.1L287.5,222.4L288.5,221.9L289.5,221.7L290.5,220.8L291.5,222.0L292.5,221.4L293.5,220.8L294.5,220.6L295.5,221.7L296.5,222.9L297.5,222.4L298.5,222.7L299.5,222.8L300.5,221.8L301.5,222.4L302.5,224.1L303.5,223.9L304.5,224.8L305.5,223.6L306.5,223.2L307.5,223.7L308.5,223.6L309.5,223.0L310.5,223.3L311.5,222.6L312.5,223.2L313.5,222.9L314.5,222.4L315.5,222.2L316.5,223.7L317.5,223.6L318.5,225.5L319.5,226.3L320.5,227.5L321.5,226.6L322.5,228.0L323.5,228.4L324.5,228.8L325.5,228.7L326.5,228.6L327.5,227.9L328.5,226.4L329.5,226.8L330.5,226.9L331.5,226.7L332.5,227.6L333.5,229.0L334.5,229.6L335.5,229.4L336.5,232.1L337.5,234.6L338.5,236.5L339.5,238.3L340.5,238.8L341.5,236.6L342.5,234.2L343.5,233.3L344.5,233.3L345.5,232.9L346.5,231.8L347.5,232.3L348.5,233.0L349.5,233.5L350.5,234.7L351.5,235.1L352.5,236.9L353.5,237.7L354.5,240.0L355.5,238.8L356.5,237.9L357.5,237.6L358.5,235.6L359.5,235.1L360.5,236.4L361.5,236.5L362.5,235.9L363.5,236.2L364.5,235.7L365.5,235.6L366.5,235.6L367.5,235.8L368.5,235.4L369.5,235.7L370.5,236.1L371.5,238.1L372.5,237.2L373.5,236.4L374.5,237.4L375.5,238.6L376.5,238.4L377.5,241.0L378.5,240.7L379.5,238.5L380.5,239.0L381.5,238.1L382.5,237.0L383.5,237.8L384.5,237.9L385.5,237.8L386.5,239.0L387.5,239.2L388.5,239.1L389.5,238.7L390.5,239.1L391.5,239.5L392.5,240.3L393.5,240.4L394.5,239.7L395.5,239.8L396.5,240.7L397.5,241.3L398.5,239.3L399.5,239.3L400.5,239.8L401.5,242.4L402.5,241.9L403.5,241.8L404.5,241.0L405.5,241.6L406.5,242.4L407.5,242.5L408.5,244.5L409.5,243.7L410.5,243.9L411.5,244.9L412.5,244.2L413.5,243.6L414.5,245.6L415.5,246.4L416.5,246.4L417.5,246.6L418.5,247.3L419.5,248.3L420.5,247.1L421.5,247.7L422.5,250.3L423.5,252.9L424.5,252.9L425.5,253.3L426.5,252.3L427.5,251.6L428.5,252.0L429.5,251.6L430.5,253.4L431.5,253.8L432.5,254.0L433.5,253.9L434.5,255.0L435.5,255.8L436.5,257.0L437.5,259.8L438.5,263.3L439.5,266.3L440.5,267.1L441.5,264.5L442.5,261.6L443.5,260.0L444.5,259.3L445.5,259.0L446.5,259.3L447.5,259.5L448.5,259.9L449.5,260.0L450.5,260.4L451.5,261.7L452.5,261.7L453.5,261.8L454.5,262.7L455.5,263.8L456.5,263.9L457.5,264.8L458.5,265.8L459.5,265.2L460.5,265.8L461.5,265.3L462.5,266.6L463.5,268.8L464.5,269.5L465.5,268.3L466.5,269.1L467.5,270.3L468.5,271.1L469.5,271.6L470.5,273.1L471.5,274.7L472.5,274.4L473.5,274.1L474.5,274.2L475.5,274.3L476.5,274.0L477.5,275.1L478.5,277.1L479.5,281.3L480.5,283.5L481.5,283.2L482.5,282.0L483.5,279.5L484.5,278.4L485.5,278.1L486.5,279.1L487.5,278.0L488.5,278.4L489.5,279.7L490.5,280.5L491.5,279.6L492.5,281.3L493.5,281.8L494.5,282.3L495.5,283.6L496.5,285.4L497.5,285.9L498.5,286.3L499.5,286.4L500.5,286.9L501.5,288.0L502.5,288.5L503.5,289.2L504.5,290.2L505.5,291.2L506.5,292.3L507.5,292.6L508.5,294.3L509.5,295.5L510.5,296.5L511.5,299.1L512.5,301.4L513.5,305.2L514.5,307.2L515.5,306.9L516.5,305.4L517.5,304.1L518.5,303.2L519.5,303.9L520.5,302.7L521.5,303.5L522.5,304.5L523.5,307.3L524.5,309.2L525.5,311.6L526.5,310.9L527.5,310.1L528.5,311.6L529.5,311.5L530.5,311.5L531.5,313.5L532.5,315.2L533.5,316.0L534.5,316.7L535.5,317.9L536.5,318.1L537.5,318.5L538.5,318.8L539.5,319.4L540.5,319.6L541.5,320.3L542.5,322.9L543.5,324.3L544.5,326.0L545.5,327.6L546.5,328.3L547.5,329.2L548.5,329.7L549.5,331.9L550.5,333.5L551.5,334.5L552.5,336.4L553.5,338.6L554.5,340.5L555.5,341.9L556.5,341.4L557.5,341.2L558.5,341.6L559.5,343.1L560.5,344.6L561.5,348.1L562.5,349.6L563.5,349.9L564.5,351.2L565.5,351.1L566.5,351.7L567.5,353.6L568.5,354.6L569.5,355.8L570.5,356.6L571.5,357.5L572.5,359.0L573.5,361.1L574.5,362.3L575.5,363.5L576.5,364.2L577.5,365.4L578.5,367.3L579.5,369.6L580.5,371.1L581.5,373.3L582.5,375.8L583.5,377.6L584.5,379.8L585.5,381.9L586.5,384.2L587.5,387.9L588.5,389.5L589.5,393.2L590.5,396.2L591.5,401.8L592.5,409.5L593.5,424.1L594.5,438.4L595.5,451.7L596.5,465.7L597.5,478.0L598.5,492.5L599.5,494.5L600.5,484.8L601.5,471.2L602.5,454.6L603.5,439.1L604.5,424.6L605.5,412.9L606.5,403.7L607.5,399.3L608.5,394.9L609.5,390.0L610.5,387.4L611.5,384.5L612.5,381.4L613.5,380.2L614.5,380.1L615.5,378.8L616.5,376.5L617.5,373.3L618.5,370.8L619.5,366.5L620.5,363.1L621.5,361.7L622.5,360.0L623.5,358.8L624.5,356.2L625.5,355.6L626.5,353.7L627.5,352.9L628.5,352.0L629.5,350.0L630.5,347.9L631.5,347.1L632.5,346.6L633.5,344.8L634.5,343.9L635.5,342.7L636.5,340.7L637.5,339.4L638.5,339.3L639.5,336.9L640.5,336.6L641.5,335.4L642.5,335.1L643.5,334.0L644.5,334.1L645.5,331.3L646.5,329.4L647.5,329.7L648.5,329.7L649.5,329.4L650.5,327.0L651.5,326.4L652.5,325.6L653.5,325.1L654.5,324.5L655.5,324.4L656.5,323.1L657.5,322.6L658.5,320.8L659.5,318.9L660.5,317.3L661.5,316.5L662.5,316.2L663.5,315.0L664.5,314.3L665.5,312.1L666.5,310.9L667.5,310.4L668.5,310.0L669.5,309.7L670.5,309.3L671.5,308.4L672.5,307.2L673.5,306.1L674.5,305.3L675.5,303.4L676.5,303.9L677.5,303.2L678.5,300.6L679.5,302.0L680.5,302.0L681.5,302.0L682.5,302.8L683.5,303.8L684.5,304.8L685.5,303.9L686.5,301.8L687.5,298.6L688.5,297.9L689.5,296.4L690.5,294.8L691.5,294.4L692.5,294.0L693.5,292.5L694.5,292.3L695.5,291.1L696.5,289.9L697.5,289.1L698.5,288.2L699.5,287.8L700.5,288.2L701.5,287.3L702.5,286.5L703.5,286.9L704.5,287.8L705.5,289.2L706.5,292.1L707.5,292.6L708.5,290.2L709.5,287.9L710.5,284.6L711.5,282.3L712.5,279.8L713.5,279.2L714.5,278.5L715.5,278.9L716.5,278.5L717.5,277.8L718.5,278.4L719.5,276.2L720.5,275.1L721.5,276.1L722.5,274.8L723.5,274.4L724.5,273.6L725.5,272.9L726.5,273.6L727.5,272.9L728.5,271.2L729.5,271.3L730.5,271.6L731.5,271.7L732.5,271.5L733.5,270.1L734.5,268.1L735.5,267.6L736.5,267.2L737.5,265.4L738.5,266.0L739.5,266.3L740.5,265.4L741.5,264.6L742.5,265.1L743.5,265.2L744.5,264.2L745.5,263.3L746.5,263.7L747.5,263.0L748.5,262.7L749.5,261.6L750.5,261.2L751.5,260.8L752.5,260.5L753.5,259.3L754.5,258.3L755.5,259.1L756.5,259.1L757.5,260.5L758.5,260.6L759.5,259.7L760.5,257.8L761.5,257.3L762.5,256.5L763.5,255.8L764.5,256.4L765.5,255.7L766.5,255.7L767.5,255.0L768.5,255.6L769.5,256.5L770.5,255.5L771.5,254.6L772.5,254.4L773.5,253.2L774.5,253.2L775.5,253.5L776.5,252.9L777.5,254.0L778.5,254.2L779.5,254.0L780.5,253.3L781.5,253.5L782.5,253.1L783.5,253.2L784.5,252.3L785.5,250.5L786.5,250.9L787.5,248.9L788.5,249.6L789.5,249.5L790.5,249.4" fill="none" stroke="#000" stroke-width="1"/><path d="M100.5 198.5H790M100.5 198.5V510.5H790" fill="none" stroke="#c2e6c2" stroke-width="1"/><path d="M71.5 198.5H100.5M71.5 198V512M71 511.5H790" fill="none" stroke="#000" stroke-width="1"/><path d="M143.5 506V511" stroke="#000" stroke-width="1"/><path d="M229.5 506V511" stroke="#000" stroke-width="1"/><path d="M316.5 506V511" stroke="#000" stroke-width="1"/><path d="M403.5 506V511" stroke="#000" stroke-width="1"/><path d="M489.5 506V511" stroke="#000" stroke-width="1"/><path d="M576.5 506V511" stroke="#000" stroke-width="1"/><path d="M662.5 506V511" stroke="#000" stroke-width="1"/><path d="M749.5 506V511" stroke="#000" stroke-width="1"/><path d="M66 261.5H71" stroke="#000" stroke-width="1"/><path d="M66 323.5H71" stroke="#000" stroke-width="1"/><path d="M66 386.5H71" stroke="#000" stroke-width="1"/><path d="M66 449.5H71" stroke="#000" stroke-width="1"/></g></svg>
<span class="t" style="left:131.30px;top:514.69px;font-size:11px;line-height:14px;color:#000;letter-spacing:-0.156px;transform:scaleY(1.13);transform-origin:0 10.81px;">6510</span>
<span class="t" style="left:217.30px;top:514.69px;font-size:11px;line-height:14px;color:#000;letter-spacing:-0.156px;transform:scaleY(1.13);transform-origin:0 10.81px;">6520</span>
<span class="t" style="left:304.30px;top:514.69px;font-size:11px;line-height:14px;color:#000;letter-spacing:-0.156px;transform:scaleY(1.13);transform-origin:0 10.81px;">6530</span>
<span class="t" style="left:391.30px;top:514.69px;font-size:11px;line-height:14px;color:#000;letter-spacing:-0.156px;transform:scaleY(1.13);transform-origin:0 10.81px;">6540</span>
<span class="t" style="left:477.30px;top:514.69px;font-size:11px;line-height:14px;color:#000;letter-spacing:-0.156px;transform:scaleY(1.13);transform-origin:0 10.81px;">6550</span>
<span class="t" style="left:564.30px;top:514.69px;font-size:11px;line-height:14px;color:#000;letter-spacing:-0.156px;transform:scaleY(1.13);transform-origin:0 10.81px;">6560</span>
<span class="t" style="left:650.30px;top:514.69px;font-size:11px;line-height:14px;color:#000;letter-spacing:-0.156px;transform:scaleY(1.13);transform-origin:0 10.81px;">6570</span>
<span class="t" style="left:737.30px;top:514.69px;font-size:11px;line-height:14px;color:#000;letter-spacing:-0.156px;transform:scaleY(1.13);transform-origin:0 10.81px;">6580</span>
<span class="t" style="left:46.50px;top:254.89px;font-size:11px;line-height:14px;color:#000;letter-spacing:-0.395px;transform:scaleY(1.13);transform-origin:0 10.81px;">1.0</span>
<span class="t" style="left:46.50px;top:316.89px;font-size:11px;line-height:14px;color:#000;letter-spacing:-0.395px;transform:scaleY(1.13);transform-origin:0 10.81px;">0.8</span>
<span class="t" style="left:46.50px;top:379.89px;font-size:11px;line-height:14px;color:#000;letter-spacing:-0.395px;transform:scaleY(1.13);transform-origin:0 10.81px;">0.6</span>
<span class="t" style="left:46.50px;top:442.89px;font-size:11px;line-height:14px;color:#000;letter-spacing:-0.395px;transform:scaleY(1.13);transform-origin:0 10.81px;">0.4</span>
<div style="left:790px;top:64px;width:329px;height:25px;background:#fff;"></div>
<div style="left:790px;top:89px;width:329px;height:452px;background:#f0f0f0;"></div>
<span class="t" style="left:793.00px;top:68.82px;font-size:11.5px;line-height:15px;color:#9d9d9d;letter-spacing:0.233px;transform:scaleY(1.03);transform-origin:0 11.48px;">Atmospheric Water Removal</span>
<div style="left:1099px;top:66px;width:19px;height:19px;background:#e6e6e6;"></div>
<svg style="left:1099px;top:66px" width="19" height="19" viewBox="0 0 19 19" ><path d="M6.8 6.8L12.2 12.2M12.2 6.8L6.8 12.2" stroke="#f6f6f6" stroke-width="1"/></svg>
<div class="btn" style="left:798px;top:97px;width:137px;height:21px;"></div>
<span class="t" style="left:810.00px;top:100.29px;font-size:11px;line-height:14px;color:#000;letter-spacing:-0.309px;transform:scaleY(1.13);transform-origin:0 10.81px;">Atm. Transmission File...</span>
<span class="t" style="left:942.50px;top:97.19px;font-size:11px;line-height:14px;color:#000;letter-spacing:-0.140px;transform:scaleY(1.13);transform-origin:0 10.81px;">H2O column density: 1.69 g/cm2</span>
<span class="t" style="left:798.30px;top:121.39px;font-size:11px;line-height:14px;color:#000;letter-spacing:-0.211px;transform:scaleY(1.13);transform-origin:0 10.81px;">H2O_Summer_Lat47_Hgt0600_Z45</span>
<div class="btn" style="left:798px;top:149px;width:137px;height:21px;"></div>
<span class="t" style="left:817.00px;top:152.29px;font-size:11px;line-height:14px;color:#000;letter-spacing:-0.157px;transform:scaleY(1.13);transform-origin:0 10.81px;">Track Bar Setttings...</span>
<span class="t" style="left:806.30px;top:185.49px;font-size:11px;line-height:14px;color:#000;letter-spacing:-0.245px;transform:scaleY(1.13);transform-origin:0 10.81px;">Intensity</span>
<span class="t" style="left:1081.30px;top:185.49px;font-size:11px;line-height:14px;color:#000;letter-spacing:-0.547px;transform:scaleY(1.13);transform-origin:0 10.81px;">55.5%</span>
<div class="trk" style="left:805px;top:204px;width:306px;height:15px;"></div>
<svg style="left:932px;top:203px" width="9" height="21" viewBox="0 0 9 21" ><path d="M0 0H9V15.5L4.5 20L0 15.5z" fill="#f0f0f0" stroke="none"/><path d="M0.5 15.5V0.5H8" fill="none" stroke="#fff" stroke-width="1"/><path d="M0.5 15.5L4.5 19.5" fill="none" stroke="#fff" stroke-width="1"/><path d="M7.5 1V15.2L4.5 18.2" fill="none" stroke="#a0a0a0" stroke-width="1"/><path d="M8.5 0V15.6L4.5 19.6" fill="none" stroke="#696969" stroke-width="1.1"/></svg>
<span class="t" style="left:806.30px;top:225.49px;font-size:11px;line-height:14px;color:#000;letter-spacing:-0.403px;transform:scaleY(1.13);transform-origin:0 10.81px;">FWHM</span>
<span class="t" style="left:1083.80px;top:225.49px;font-size:11px;line-height:14px;color:#000;letter-spacing:-0.256px;transform:scaleY(1.13);transform-origin:0 10.81px;">0.244</span>
<div class="trk" style="left:805px;top:244px;width:306px;height:15px;"></div>
<svg style="left:910px;top:243px" width="9" height="21" viewBox="0 0 9 21" ><path d="M0 0H9V15.5L4.5 20L0 15.5z" fill="#f0f0f0" stroke="none"/><path d="M0.5 15.5V0.5H8" fill="none" stroke="#fff" stroke-width="1"/><path d="M0.5 15.5L4.5 19.5" fill="none" stroke="#fff" stroke-width="1"/><path d="M7.5 1V15.2L4.5 18.2" fill="none" stroke="#a0a0a0" stroke-width="1"/><path d="M8.5 0V15.6L4.5 19.6" fill="none" stroke="#696969" stroke-width="1.1"/></svg>
<span class="t" style="left:806.30px;top:265.49px;font-size:11px;line-height:14px;color:#000;letter-spacing:-0.243px;transform:scaleY(1.13);transform-origin:0 10.81px;">Shift in x</span>
<span class="t" style="left:1074.80px;top:265.49px;font-size:11px;line-height:14px;color:#000;letter-spacing:-0.301px;transform:scaleY(1.13);transform-origin:0 10.81px;">-0.4395</span>
<div class="trk" style="left:805px;top:284px;width:306px;height:15px;"></div>
<svg style="left:805px;top:283px" width="9" height="21" viewBox="0 0 9 21" ><path d="M0 0H9V15.5L4.5 20L0 15.5z" fill="#f0f0f0" stroke="none"/><path d="M0.5 15.5V0.5H8" fill="none" stroke="#fff" stroke-width="1"/><path d="M0.5 15.5L4.5 19.5" fill="none" stroke="#fff" stroke-width="1"/><path d="M7.5 1V15.2L4.5 18.2" fill="none" stroke="#a0a0a0" stroke-width="1"/><path d="M8.5 0V15.6L4.5 19.6" fill="none" stroke="#696969" stroke-width="1.1"/></svg>
<div class="grp" style="left:798px;top:334px;width:168px;height:83px;"></div>
<div class="lbl" style="left:805.3px;top:328px;width:30.5px;height:12px;"></div>
<span class="t" style="left:806.30px;top:328.89px;font-size:11px;line-height:14px;color:#000;font-weight:bold;letter-spacing:0.701px;transform:scaleY(1.13);transform-origin:0 10.81px;">Draw</span>
<div class="chk" style="left:806px;top:347px;width:13px;height:13px;"></div>
<svg style="left:806px;top:347px" width="13" height="13" viewBox="0 0 13 13" ><path d="M3 5.5L5.5 8L10 3.5" fill="none" stroke="#000" stroke-width="2.2"/></svg>
<span class="t" style="left:824.50px;top:345.99px;font-size:11px;line-height:14px;color:#000;letter-spacing:-0.376px;transform:scaleY(1.13);transform-origin:0 10.81px;">Original Profile</span>
<div class="chk" style="left:806px;top:371px;width:13px;height:13px;"></div>
<svg style="left:806px;top:371px" width="13" height="13" viewBox="0 0 13 13" ><path d="M3 5.5L5.5 8L10 3.5" fill="none" stroke="#000" stroke-width="2.2"/></svg>
<span class="t" style="left:824.50px;top:369.99px;font-size:11px;line-height:14px;color:#000;letter-spacing:-0.341px;transform:scaleY(1.13);transform-origin:0 10.81px;">Atm. Transmission</span>
<div class="chk" style="left:806px;top:395px;width:13px;height:13px;"></div>
<svg style="left:806px;top:395px" width="13" height="13" viewBox="0 0 13 13" ><path d="M3 5.5L5.5 8L10 3.5" fill="none" stroke="#000" stroke-width="2.2"/></svg>
<span class="t" style="left:824.50px;top:393.99px;font-size:11px;line-height:14px;color:#000;letter-spacing:-0.335px;transform:scaleY(1.13);transform-origin:0 10.81px;">Dried Profile</span>
<div style="left:926px;top:371px;width:30px;height:15px;background:#ff0000;border:1px solid #000;"></div>
<div style="left:926px;top:395px;width:30px;height:15px;background:#000;"></div>
<div class="grp" style="left:982px;top:334px;width:128px;height:83px;"></div>
<div class="lbl" style="left:989px;top:328px;width:64px;height:12px;"></div>
<span class="t" style="left:990.00px;top:328.89px;font-size:11px;line-height:14px;color:#000;font-weight:bold;letter-spacing:0.427px;transform:scaleY(1.13);transform-origin:0 10.81px;">Auto-Clean</span>
<svg style="left:990.4px;top:348.5px" width="13" height="13" viewBox="0 0 13 13" ><circle cx="6.5" cy="6.5" r="5.2" fill="#fff"/><path d="M2.61 10.39A5.5 5.5 0 0 1 10.39 2.61" fill="none" stroke="#8a8a8a" stroke-width="1.1"/><path d="M3.32 9.68A4.5 4.5 0 0 1 9.68 3.32" fill="none" stroke="#4a4a4a" stroke-width="1"/><path d="M2.61 10.39A5.5 5.5 0 0 0 10.39 2.61" fill="none" stroke="#fff" stroke-width="1.1"/><path d="M3.32 9.68A4.5 4.5 0 0 0 9.68 3.32" fill="none" stroke="#e3e3e3" stroke-width="1"/></svg>
<span class="t" style="left:1008.50px;top:348.19px;font-size:11px;line-height:14px;color:#000;letter-spacing:-0.042px;transform:scaleY(1.13);transform-origin:0 10.81px;">inactive</span>
<svg style="left:990.4px;top:370.5px" width="13" height="13" viewBox="0 0 13 13" ><circle cx="6.5" cy="6.5" r="5.2" fill="#fff"/><path d="M2.61 10.39A5.5 5.5 0 0 1 10.39 2.61" fill="none" stroke="#8a8a8a" stroke-width="1.1"/><path d="M3.32 9.68A4.5 4.5 0 0 1 9.68 3.32" fill="none" stroke="#4a4a4a" stroke-width="1"/><path d="M2.61 10.39A5.5 5.5 0 0 0 10.39 2.61" fill="none" stroke="#fff" stroke-width="1.1"/><path d="M3.32 9.68A4.5 4.5 0 0 0 9.68 3.32" fill="none" stroke="#e3e3e3" stroke-width="1"/><circle cx="6.5" cy="6.5" r="1.9" fill="#000"/></svg>
<span class="t" style="left:1008.50px;top:370.19px;font-size:11px;line-height:14px;color:#000;letter-spacing:-0.480px;transform:scaleY(1.13);transform-origin:0 10.81px;">method 1</span>
<svg style="left:990.4px;top:392.3px" width="13" height="13" viewBox="0 0 13 13" ><circle cx="6.5" cy="6.5" r="5.2" fill="#fff"/><path d="M2.61 10.39A5.5 5.5 0 0 1 10.39 2.61" fill="none" stroke="#8a8a8a" stroke-width="1.1"/><path d="M3.32 9.68A4.5 4.5 0 0 1 9.68 3.32" fill="none" stroke="#4a4a4a" stroke-width="1"/><path d="M2.61 10.39A5.5 5.5 0 0 0 10.39 2.61" fill="none" stroke="#fff" stroke-width="1.1"/><path d="M3.32 9.68A4.5 4.5 0 0 0 9.68 3.32" fill="none" stroke="#e3e3e3" stroke-width="1"/></svg>
<span class="t" style="left:1008.50px;top:391.99px;font-size:11px;line-height:14px;color:#000;letter-spacing:-0.337px;transform:scaleY(1.13);transform-origin:0 10.81px;">method 2</span>
<span class="t" style="left:982.60px;top:425.19px;font-size:11px;line-height:14px;color:#000;letter-spacing:-0.317px;transform:scaleY(1.13);transform-origin:0 10.81px;">Residuals:</span>
<span class="t" style="left:982.60px;top:441.19px;font-size:11px;line-height:14px;color:#000;letter-spacing:-0.223px;transform:scaleY(1.13);transform-origin:0 10.81px;">0.111</span>
<div class="btn" style="left:798px;top:438px;width:129px;height:21px;"></div>
<span class="t" style="left:806.00px;top:441.29px;font-size:11px;line-height:14px;color:#000;letter-spacing:-0.282px;transform:scaleY(1.13);transform-origin:0 10.81px;">Store Atm. Transmission</span>
<div class="btn" style="left:798px;top:470px;width:129px;height:21px;"></div>
<span class="t" style="left:820.00px;top:473.29px;font-size:11px;line-height:14px;color:#000;letter-spacing:-0.270px;transform:scaleY(1.13);transform-origin:0 10.81px;">Store Dried Profile</span>
<span class="t" style="left:798.70px;top:505.19px;font-size:11px;line-height:14px;color:#000;letter-spacing:-0.289px;transform:scaleY(1.13);transform-origin:0 10.81px;">time: 0.928 s</span>
<div style="left:790px;top:524px;width:329px;height:17px;background:#f0f0f0;border:1px solid;border-color:#a0a0a0 #fff #fff #a0a0a0;"></div>
<span class="t" style="left:792.00px;top:526.12px;font-size:11.5px;line-height:15px;color:#000;letter-spacing:-0.035px;transform:scaleY(1.03);transform-origin:0 11.48px;">Vega110737878.fit</span>
<svg style="left:0;top:0" width="1167" height="574" viewBox="0 0 1167 574"><path d="M1118.7 257 C1115 254 1112 252 1109.7 250.5 C1105 247.5 1101 246 1097.5 244.4 C1093 242.5 1089 240.6 1085.3 239.2 C1081 237.6 1078 236.3 1074.8 235.3 C1072.5 234.6 1071.2 234.2 1070 234.3 C1068.2 234.6 1067 235.8 1066.1 237.4 C1064.2 240.4 1062.7 243 1061.8 246.1 C1060.8 249.4 1060.2 252 1060 254.8 C1059.8 259 1060.6 263 1061.8 267 C1062.8 270.8 1063.8 274.2 1065.3 277.5 C1066.8 280.6 1069 283 1071.4 285.3 C1073.2 287 1074.6 289 1076.6 290.6 C1080 293 1083.4 294.8 1087 296.7 C1091 299 1095 301.4 1099.2 303.6 C1102.7 305.4 1106 306.8 1109.7 308 C1112 308.8 1114.4 309.8 1116.7 310 C1119 310.2 1121.4 309.6 1123.6 308.9 C1126.4 308 1129.2 307.2 1131.5 305.4 C1133.5 303.8 1135 301.6 1135.8 299.3 C1136.6 297.3 1137 295.3 1137 293.2 C1137 289 1136 285 1135 281 C1134 277.3 1132 274 1130.6 270.5 C1129 266.6 1127.8 263 1126.2 259.2 C1125.3 257 1124.2 254.8 1122.8 253.1 C1121.8 251.9 1120.5 251 1119.3 250.5" fill="none" stroke="#f00" stroke-width="1.8" stroke-linecap="round" stroke-linejoin="round"/></svg>
</div>
</body></html>
